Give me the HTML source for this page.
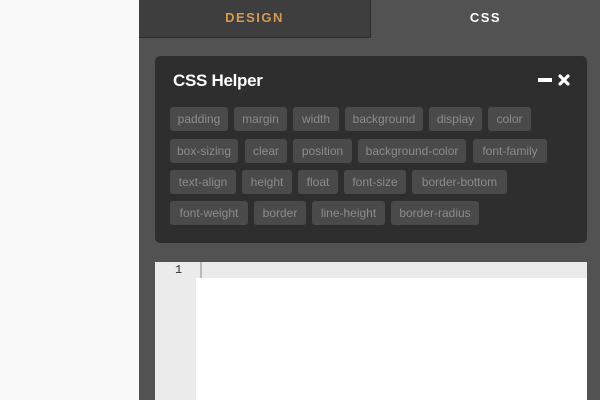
<!DOCTYPE html>
<html><head><style>
*{margin:0;padding:0;box-sizing:border-box}
body{width:600px;height:400px;overflow:hidden;background:#f9f9f9;font-family:"Liberation Sans",sans-serif;position:relative}
#p{position:absolute;left:139px;top:0;width:461px;height:400px;background:#525252}
.tab{position:absolute;top:0;height:38px;line-height:36px;text-align:center;font-weight:bold;font-size:13px;letter-spacing:1.5px}
#d{left:0;width:232px;background:#3e3e3e;color:#d49a50;border-right:1px solid #2e2e2e;border-bottom:1px solid #2e2e2e}
#c{left:232px;width:229px;color:#fff}
#h{position:absolute;left:16px;top:56px;width:432px;height:187px;background:#2e2e2e;border-radius:5px}
#t{position:absolute;left:18px;top:15px;color:#fff;font-weight:bold;font-size:17px;letter-spacing:-0.3px}
.tg{position:absolute;height:24px;line-height:24px;background:#4a4a4a;color:#8c8c8c;font-size:12px;text-align:center;border-radius:3px}
#ed{position:absolute;left:16px;top:262px;width:432px;height:138px;background:#fff}
</style></head><body>
<div id="p">
<div class="tab" id="d">DESIGN</div><div class="tab" id="c">CSS</div>
<div id="h"><div id="t">CSS Helper</div>
<div style="position:absolute;left:383px;top:22px;width:14px;height:4px;background:#fff"></div>
<svg style="position:absolute;left:403px;top:18px" width="12" height="12" viewBox="0 0 12 12"><path d="M2 2L10 10M10 2L2 10" stroke="#fff" stroke-width="3.2" stroke-linecap="round"/></svg>
</div>
<div id="ed">
<div style="position:absolute;left:0;top:0;width:41px;height:138px;background:#ebebeb"></div>
<div style="position:absolute;left:0;top:0;width:432px;height:16px;background:#ebebeb"></div>
<div style="position:absolute;left:20px;top:1px;font-size:12px;color:#333;font-family:'Liberation Mono',monospace">1</div>
<div style="position:absolute;left:45px;top:0;width:2px;height:16px;background:#bbb"></div>
</div>
</div>
<div class="tg" style="left:170px;top:107px;width:58px">padding</div>
<div class="tg" style="left:234px;top:107px;width:53px">margin</div>
<div class="tg" style="left:293px;top:107px;width:46px">width</div>
<div class="tg" style="left:345px;top:107px;width:78px">background</div>
<div class="tg" style="left:429px;top:107px;width:53px">display</div>
<div class="tg" style="left:488px;top:107px;width:43px">color</div>
<div class="tg" style="left:170px;top:139px;width:68px">box-sizing</div>
<div class="tg" style="left:245px;top:139px;width:42px">clear</div>
<div class="tg" style="left:293px;top:139px;width:59px">position</div>
<div class="tg" style="left:358px;top:139px;width:108px">background-color</div>
<div class="tg" style="left:473px;top:139px;width:74px">font-family</div>
<div class="tg" style="left:170px;top:170px;width:66px">text-align</div>
<div class="tg" style="left:242px;top:170px;width:50px">height</div>
<div class="tg" style="left:298px;top:170px;width:40px">float</div>
<div class="tg" style="left:344px;top:170px;width:62px">font-size</div>
<div class="tg" style="left:412px;top:170px;width:95px">border-bottom</div>
<div class="tg" style="left:170px;top:201px;width:78px">font-weight</div>
<div class="tg" style="left:254px;top:201px;width:52px">border</div>
<div class="tg" style="left:312px;top:201px;width:73px">line-height</div>
<div class="tg" style="left:391px;top:201px;width:88px">border-radius</div>
</body></html>
